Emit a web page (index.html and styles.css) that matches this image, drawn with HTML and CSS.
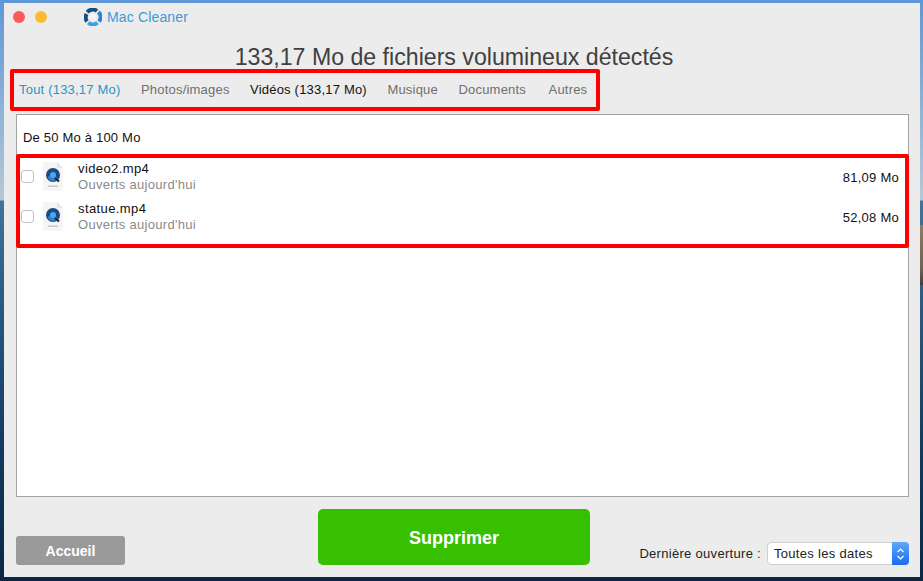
FILE: index.html
```html
<!DOCTYPE html>
<html lang="fr">
<head>
    <meta charset="UTF-8">
    <meta name="viewport" content="width=device-width, initial-scale=1.0">
    <title>Mac Cleaner</title>
    <link rel="stylesheet" href="styles.css">
</head>
<body>
    <div class="window">
        <div class="titlebar">
            <span class="light light-close"></span>
            <span class="light light-min"></span>
            <svg class="logo" width="18" height="18" viewBox="0 0 18 18">
                <path d="M3.200 4.200 A7.200 7.200 0 0 1 13 3" fill="none" stroke="#17507f" stroke-width="4"/>
                <path d="M14.400 4 A7.200 7.200 0 0 1 15 13.500" fill="none" stroke="#2a86c8" stroke-width="4"/>
                <path d="M13.500 14.700 A7.200 7.200 0 0 1 4.200 14.700" fill="none" stroke="#3aa0e2" stroke-width="4"/>
                <path d="M3 13.500 A7.200 7.200 0 0 1 2.600 6" fill="none" stroke="#17507f" stroke-width="4"/>
                <path d="M6.200 6.200 12 6.500 11.800 11.800 6 11.500Z" fill="#f2f4f6"/>
            </svg>
            <span class="app-name">Mac Cleaner</span>
        </div>

        <h1 class="headline">133,17 Mo de fichiers volumineux détectés</h1>

        <div class="tabs">
            <span class="tab tab-active">Tout (133,17 Mo)</span>
            <span class="tab">Photos/images</span>
            <span class="tab tab-current">Vidéos (133,17 Mo)</span>
            <span class="tab">Musique</span>
            <span class="tab">Documents</span>
            <span class="tab">Autres</span>
        </div>

        <div class="panel">
            <div class="group-title">De 50 Mo à 100 Mo</div>
            <div class="file-row">
                <span class="checkbox"></span>
                <svg class="file-icon" width="22" height="29" viewBox="0 0 22 29">
                    <path d="M1 0H15L21 6V29H1Z" fill="#f5f5f5"/>
                    <path d="M15 0V6H21Z" fill="#e6e6e6"/>
                    <circle cx="11" cy="13" r="7" fill="#1f4a80"/>
                    <path d="M5.500 15 A6 6 0 0 0 16 16.500 L11 12Z" fill="#2a7fd0"/>
                    <circle cx="11" cy="13" r="3" fill="#46a8ee"/>
                    <path d="M13 16 17 19.500" stroke="#20262e" stroke-width="2.200"/>
                    <rect x="6" y="23.500" width="10" height="1.500" fill="#c8c8c8"/>
                </svg>
                <div class="file-text">
                    <div class="file-name">video2.mp4</div>
                    <div class="file-meta">Ouverts aujourd'hui</div>
                </div>
                <div class="file-size">81,09 Mo</div>
            </div>
            <div class="file-row">
                <span class="checkbox"></span>
                <svg class="file-icon" width="22" height="29" viewBox="0 0 22 29">
                    <path d="M1 0H15L21 6V29H1Z" fill="#f5f5f5"/>
                    <path d="M15 0V6H21Z" fill="#e6e6e6"/>
                    <circle cx="11" cy="13" r="7" fill="#1f4a80"/>
                    <path d="M5.500 15 A6 6 0 0 0 16 16.500 L11 12Z" fill="#2a7fd0"/>
                    <circle cx="11" cy="13" r="3" fill="#46a8ee"/>
                    <path d="M13 16 17 19.500" stroke="#20262e" stroke-width="2.200"/>
                    <rect x="6" y="23.500" width="10" height="1.500" fill="#c8c8c8"/>
                </svg>
                <div class="file-text">
                    <div class="file-name">statue.mp4</div>
                    <div class="file-meta">Ouverts aujourd'hui</div>
                </div>
                <div class="file-size">52,08 Mo</div>
            </div>
        </div>

        <div class="footer">
            <button class="home-button">Accueil</button>
            <button class="delete-button">Supprimer</button>
            <div class="date-filter">
                <span class="date-label">Dernière ouverture :</span>
                <div class="select">
                    <span class="select-value">Toutes les dates</span>
                    <span class="select-arrows">
                        <svg width="9" height="14" viewBox="0 0 9 14">
                            <path d="M1.500 5 4.500 2 7.500 5M1.500 9 4.500 12 7.500 9" fill="none" stroke="#fff" stroke-width="1.200"/>
                        </svg>
                    </span>
                </div>
            </div>
        </div>

        <!-- cadres rouges d'annotation -->
        <div class="mark mark-tabs"></div>
        <div class="mark mark-rows"></div>
    </div>
</body>
</html>
```

FILE: styles.css
```css
html, body {
    margin: 0;
    height: 100%;
    overflow: hidden;
}

body {
    height: 581px;
    font-family: "Liberation Sans", Arial, sans-serif;
    background:
        linear-gradient(to bottom, transparent 225px, #8d7c62 225px, #6f624f 270px, #3d3d3f 285px, transparent 285px) right top / 3px 100% no-repeat,
        linear-gradient(to bottom, #5f97d6 0, #8fb2d6 110px, #b5c8d6 200px, #43739a 201px, #2c5a80 300px, #123a5e 450px, #0c2744 581px);
}

.window {
    position: relative;
    box-sizing: border-box;
    width: 916px;
    height: 574px;
    margin: 3px 0 0 4px;
    padding: 0 11px 0 12px;
    background-color: #ececec;
    display: flex;
    flex-direction: column;
}

.titlebar {
    height: 28px;
    margin-left: -3px;
    display: flex;
    align-items: center;
}

.light {
    width: 12px;
    height: 12px;
    border-radius: 50%;
    margin-right: 10px;
}

.light-close {
    background-color: #fc5b57;
}

.light-min {
    background-color: #fdbc2f;
}

.logo {
    margin-left: 27px;
}

.app-name {
    margin-left: 5px;
    font-size: 14px;
    letter-spacing: 0.15px;
    color: #3a9bdc;
}

.headline {
    margin: 12px 0 0;
    padding-right: 17px;
    height: 28px;
    line-height: 28px;
    font-size: 23.150px;
    font-weight: normal;
    text-align: center;
    color: #404040;
}

.tabs {
    height: 36px;
    display: flex;
    align-items: center;
    gap: 20.500px;
    padding-left: 3px;
    font-size: 13px;
    letter-spacing: 0.2px;
}

.tab {
    color: #6f6f6f;
}

.tab:last-child {
    margin-left: 2px;
}

.tab-active {
    color: #2b94c9;
}

.tab-current {
    color: #111;
}

.panel {
    box-sizing: border-box;
    height: 383px;
    margin-top: 7px;
    background-color: #fff;
    border: 1px solid #a3a3a3;
}

.group-title {
    height: 41px;
    line-height: 46px;
    padding-left: 6px;
    font-size: 13px;
    letter-spacing: 0.2px;
    color: #111;
}

.file-row {
    height: 40px;
    display: flex;
    align-items: center;
    padding-right: 6px;
}

.checkbox {
    box-sizing: border-box;
    width: 13px;
    height: 13px;
    margin-left: 4px;
    border: 1px solid #c2c2c2;
    border-radius: 3px;
    background-color: #fff;
}

.file-icon {
    margin-left: 8px;
}

.file-text {
    flex: 1;
    margin-left: 14px;
    padding-top: 1px;
}

.file-name {
    font-size: 13px;
    line-height: 16px;
    letter-spacing: 0.4px;
    color: #111;
}

.file-meta {
    font-size: 13px;
    line-height: 16px;
    letter-spacing: 0.3px;
    color: #8a8a8a;
}

.file-size {
    padding: 3px 3px 0 0;
    font-size: 13px;
    letter-spacing: 0.25px;
    color: #111;
}

.footer {
    flex: 1;
    display: flex;
    align-items: flex-end;
    padding-bottom: 12px;
}

.home-button {
    width: 109px;
    height: 29px;
    border: none;
    border-radius: 3px;
    background-color: #9a9a9a;
    color: #fff;
    font-family: inherit;
    font-size: 14px;
    font-weight: bold;
}

.delete-button {
    width: 272px;
    height: 56px;
    margin-left: 193px;
    padding-top: 4px;
    border: none;
    border-radius: 5px;
    background-color: #37bf02;
    color: #fff;
    font-family: inherit;
    font-size: 18px;
    font-weight: bold;
}

.date-filter {
    margin-left: auto;
    display: flex;
    align-items: center;
    gap: 6px;
    font-size: 13px;
    letter-spacing: 0.3px;
    color: #222;
}

.select {
    box-sizing: border-box;
    width: 142px;
    height: 23px;
    display: flex;
    align-items: center;
    background-color: #fff;
    border: 1px solid #cfcfcf;
    border-radius: 4px;
}

.select-value {
    flex: 1;
    padding-left: 6px;
}

.select-arrows {
    width: 17px;
    height: 23px;
    margin: -1px;
    display: flex;
    align-items: center;
    justify-content: center;
    border-radius: 0 4px 4px 0;
    background: linear-gradient(to bottom, #5da9fb, #1a6cf0);
}

.mark {
    position: absolute;
    box-sizing: border-box;
    border: 4px solid #fd0000;
    border-radius: 2px;
}

.mark-tabs {
    left: 6px;
    top: 66px;
    width: 590px;
    height: 42px;
}

.mark-rows {
    left: 12px;
    top: 151px;
    width: 893px;
    height: 94px;
}
```
